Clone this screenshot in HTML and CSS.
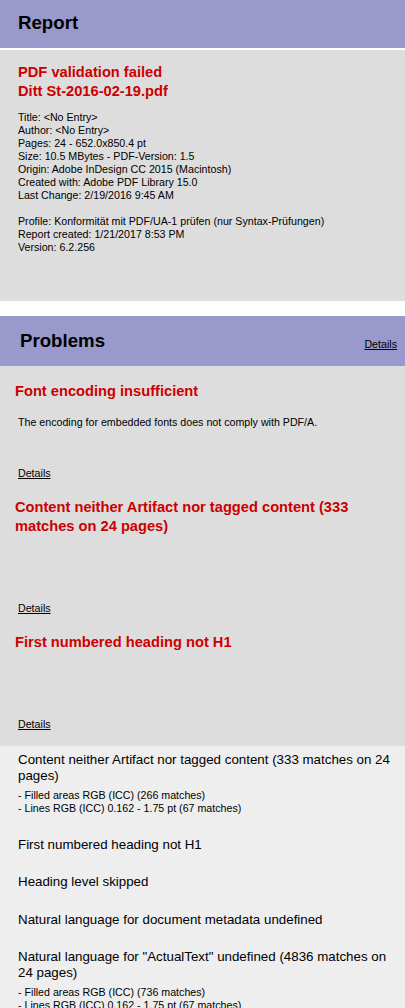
FILE: index.html
```html
<!DOCTYPE html>
<html>
<head>
  <meta charset="UTF-8">
  <title>Report</title>
  <link rel="stylesheet" href="styles.css">
</head>
<body>
  <!-- Report -->
  <div class="bar bar-report">
    <h1>Report</h1>
  </div>
  <div class="panel summary">
    <h2>PDF validation failed<br>Ditt St-2016-02-19.pdf</h2>
    <div class="meta">
      Title: &lt;No Entry&gt;<br>
      Author: &lt;No Entry&gt;<br>
      Pages: 24 - 652.0x850.4 pt<br>
      Size: 10.5 MBytes - PDF-Version: 1.5<br>
      Origin: Adobe InDesign CC 2015 (Macintosh)<br>
      Created with: Adobe PDF Library 15.0<br>
      Last Change: 2/19/2016 9:45 AM<br>
      <br>
      Profile: Konformität mit PDF/UA-1 prüfen (nur Syntax-Prüfungen)<br>
      Report created: 1/21/2017 8:53 PM<br>
      Version: 6.2.256
    </div>
  </div>

  <!-- Problems -->
  <div class="bar bar-problems">
    <h1>Problems</h1>
    <a href="#" class="link">Details</a>
  </div>
  <div class="panel problems">
    <div class="problem">
      <h3>Font encoding insufficient</h3>
      <p class="desc">The encoding for embedded fonts does not comply with PDF/A.</p>
      <a href="#" class="link">Details</a>
    </div>
    <div class="problem">
      <h3>Content neither Artifact nor tagged content (333 matches on 24 pages)</h3>
      <p class="desc"></p>
      <a href="#" class="link">Details</a>
    </div>
    <div class="problem">
      <h3>First numbered heading not H1</h3>
      <p class="desc"></p>
      <a href="#" class="link">Details</a>
    </div>
  </div>

  <div class="hits">
    <div class="hit">
      <div class="hit-title">Content neither Artifact nor tagged content (333 matches on 24 pages)</div>
      <div class="hit-subs">
        - Filled areas RGB (ICC) (266 matches)<br>
        - Lines RGB (ICC) 0.162 - 1.75 pt (67 matches)
      </div>
    </div>
    <div class="hit">
      <div class="hit-title">First numbered heading not H1</div>
    </div>
    <div class="hit">
      <div class="hit-title">Heading level skipped</div>
    </div>
    <div class="hit">
      <div class="hit-title">Natural language for document metadata undefined</div>
    </div>
    <div class="hit">
      <div class="hit-title">Natural language for "ActualText" undefined (4836 matches on 24 pages)</div>
      <div class="hit-subs">
        - Filled areas RGB (ICC) (736 matches)<br>
        - Lines RGB (ICC) 0.162 - 1.75 pt (67 matches)<br>
        - Text RGB (ICC) (4033 matches)
      </div>
    </div>
  </div>
</body>
</html>
```

FILE: styles.css
```css
html, body {
  margin:0; padding:0;
  background:#fff;
  color:#000;
  font-family:"Liberation Sans", Arial, sans-serif;
}
.link {
  display:block;
  width:max-content;
  color:#000;
  text-decoration:underline;
  font-size:10.67px;
  line-height:13px;
}

/* purple header bars */
.bar {
  background:#9999cc;
  box-sizing:border-box;
}
.bar h1 {
  margin:0;
  font-size:18.67px;
  font-weight:bold;
  line-height:21.5px;
}
.bar-report {
  height:48px;
  padding:11.5px 18px 0;
  margin-bottom:2px;
}
.bar-problems {
  height:50px;
  margin-top:15px;
  padding:13.5px 8px 15px 20px;
  display:flex;
  justify-content:space-between;
  align-items:flex-start;
}
.bar-problems .link { align-self:flex-end; }

/* grey panels */
.panel {
  background:#dddddd;
  box-sizing:border-box;
}
.summary {
  height:251px;
  padding:13px 18px 0;
}
.summary h2 {
  margin:0;
  color:#cc0000;
  font-size:14.67px;
  line-height:19px;
  font-weight:bold;
}
.meta {
  margin-top:10px;
  font-size:10.67px;
  line-height:13px;
}

.problems {
  padding:16px 0 15px;
}
.problem {
  margin-bottom:18px;
  padding-left:18px;
}
.problem:last-child { margin-bottom:0; }
.problem h3 {
  margin:0 0 0 -3px;
  color:#cc0000;
  font-size:14.67px;
  line-height:19px;
  font-weight:bold;
}
.problem .desc {
  margin:15px 0 38px;
  min-height:13px;
  font-size:10.67px;
  line-height:13px;
}

/* hit list */
.hits {
  background:#eeeeee;
  padding:6px 12px 20px 18px;
}
.hit { margin-bottom:21.5px; }
.hit-title {
  font-size:13.33px;
  line-height:16px;
}
.hit-subs {
  margin:5px 0 2px;
  font-size:10.67px;
  line-height:13px;
}
```
